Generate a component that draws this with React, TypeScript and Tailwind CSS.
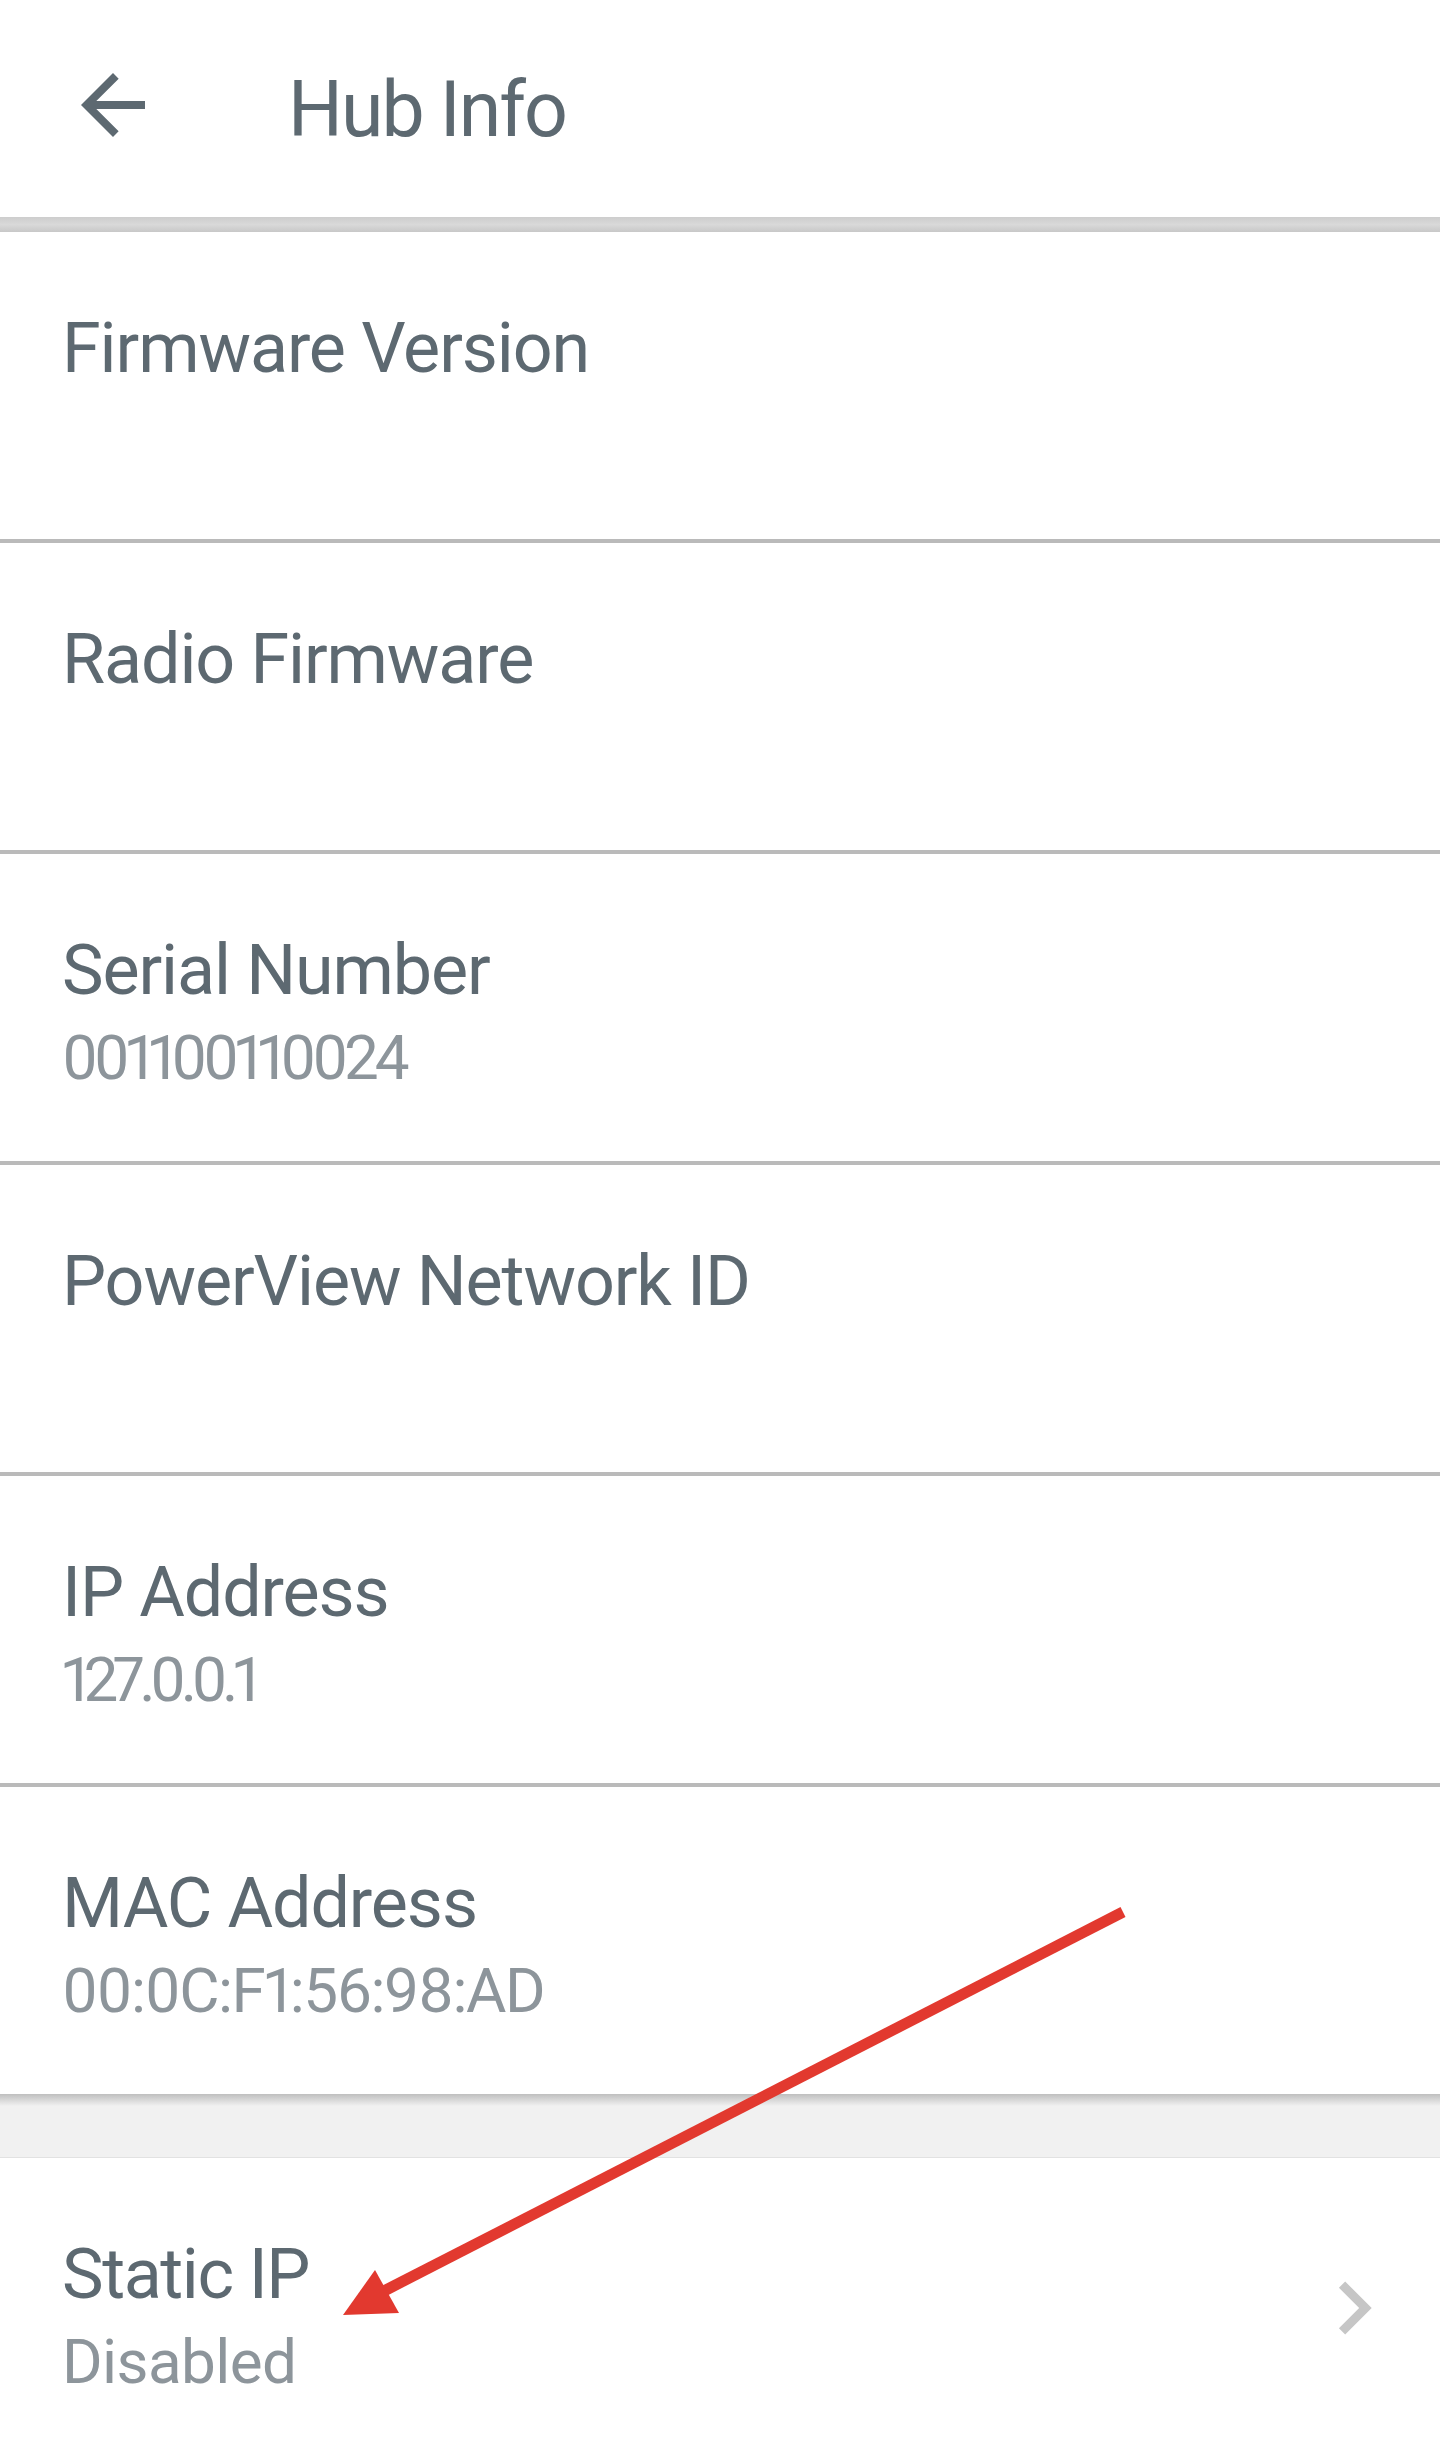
import React from "react";

const rows: { title: string; value?: string; valueClass?: string }[] = [
  { title: "Firmware Version" },
  { title: "Radio Firmware" },
  { title: "Serial Number", value: "001100110024", valueClass: "tracking-[-4.2px]" },
  { title: "PowerView Network ID" },
  { title: "IP Address", value: "127.0.0.1", valueClass: "tracking-[-5.5px]" },
  { title: "MAC Address", value: "00:0C:F1:56:98:AD", valueClass: "tracking-[-1.5px]" },
];

function InfoRow({ title, value, valueClass }: { title: string; value?: string; valueClass?: string }) {
  return (
    <div className="h-[307px] pl-[62px] pt-[75px] flex flex-col">
      <div className="text-[70px] leading-[82px] text-[#5d6971] tracking-[-1.1px]">{title}</div>
      {value ? (
        <div className={"mt-[10px] text-[62px] leading-[74px] text-[#8d959b] proportional-nums " + (valueClass ?? "")}>
          {value}
        </div>
      ) : null}
    </div>
  );
}

export default function App() {
  return (
    <div
      className="relative w-[1440px] h-[2464px] bg-white overflow-hidden"
      style={{ fontFamily: "Roboto, 'Noto Sans', 'Liberation Sans', sans-serif" }}
    >
      {/* Header */}
      <div className="h-[217px] flex items-start bg-white">
        <svg
          className="ml-[65px] mt-[57px] w-[96px] h-[96px] shrink-0"
          viewBox="0 0 24 24"
          fill="#5d6971"
        >
          <path d="M20 11H7.83l5.59-5.59L12 4l-8 8 8 8 1.41-1.41L7.83 13H20v-2z" />
        </svg>
        <div className="ml-[127px] mt-[65px] text-[77px] leading-[90px] text-[#5d6971] tracking-[-2px]">
          Hub Info
        </div>
      </div>
      {/* Header shadow */}
      <div className="h-[15px] bg-gradient-to-b from-[#cdcdcd] via-[#d9d9d9] to-[#c8c8c8]" />

      {/* List */}
      <div className="flex flex-col">
        {rows.map((r, i) => (
          <React.Fragment key={r.title}>
            <InfoRow title={r.title} value={r.value} valueClass={r.valueClass} />
            {i < rows.length - 1 ? <div className="h-[4px] bg-[#bababa]" /> : null}
          </React.Fragment>
        ))}
      </div>

      {/* Gray separator band */}
      <div className="h-[63px] bg-[#f1f1f1] flex flex-col">
        <div className="h-[12px] bg-gradient-to-b from-[#bfbfbf] to-[#f1f1f1]" />
      </div>
      <div className="h-[1px] bg-[#e2e2e2]" />

      {/* Static IP row */}
      <div className="h-[306px] flex justify-between">
        <div className="pl-[62px] pt-[75px] flex flex-col">
          <div className="text-[70px] leading-[82px] text-[#5d6971] tracking-[-1.4px]">Static IP</div>
          <div className="mt-[10px] text-[62px] leading-[74px] text-[#8d959b] tracking-[-0.6px]">Disabled</div>
        </div>
        <svg
          className="mt-[97px] mr-[33px] w-[106px] h-[106px] shrink-0"
          viewBox="0 0 24 24"
          fill="#c6c6c6"
        >
          <path d="M10 6L8.59 7.41 13.17 12l-4.58 4.59L10 18l6-6z" />
        </svg>
      </div>

      {/* Red annotation arrow */}
      <svg
        className="absolute left-0 top-0 w-[1440px] h-[2464px] pointer-events-none"
        viewBox="0 0 1440 2464"
      >
        <line x1="1123" y1="1912" x2="384" y2="2291" stroke="#e2392f" strokeWidth="11" />
        <polygon points="375,2270 343,2315 399,2313" fill="#e2392f" />
      </svg>
    </div>
  );
}
